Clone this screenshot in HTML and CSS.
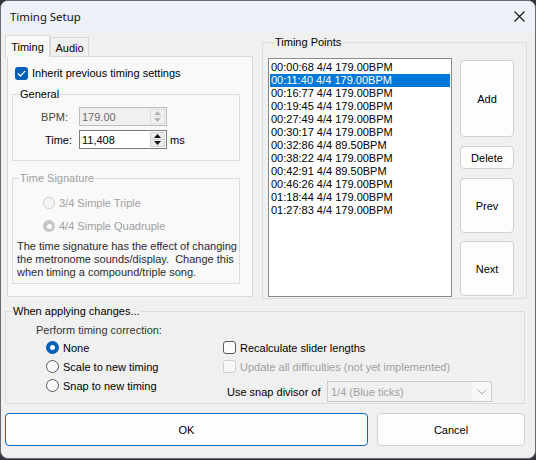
FILE: index.html
```html
<!DOCTYPE html>
<html>
<head>
<meta charset="utf-8">
<title>Timing Setup</title>
<link rel="stylesheet" href="styles.css">
</head>
<body>
<div class="window">
  <div class="titlebar">
    <span class="title">Timing Setup</span>
    <svg class="close" width="11" height="11" viewBox="0 0 11 11"><path d="M0.5 0.5 L10.5 10.5 M10.5 0.5 L0.5 10.5" stroke="#111" stroke-width="1.1" fill="none"/></svg>
  </div>
  <div class="content">
    <div class="top">
      <div class="tabs-col">
        <div class="tabstrip">
          <div class="tab tab-active">Timing</div>
          <div class="tab">Audio</div>
        </div>
        <div class="tabpanel">
          <div class="check-row inherit">
            <span class="checkbox checked"><svg width="13" height="13" viewBox="0 0 13 13"><path d="M3.2 6.8 L5.4 9 L9.8 4.4" stroke="#fff" stroke-width="1.3" fill="none" stroke-linecap="round" stroke-linejoin="round"/></svg></span>
            <span>Inherit previous timing settings</span>
          </div>
          <fieldset class="group general">
            <legend>General</legend>
            <div class="field-row">
              <span class="field-label field-label-bpm">BPM:</span>
              <div class="spinbox spinbox-disabled">
                <span class="spin-value">179.00</span>
                <span class="spin-btns">
                  <span class="spin-half"><svg width="7" height="4" viewBox="0 0 7 4"><polygon points="0,4 3.5,0 7,4" fill="#b4b4b4"/></svg></span>
                  <span class="spin-half"><svg width="7" height="4" viewBox="0 0 7 4"><polygon points="0,0 3.5,4 7,0" fill="#b4b4b4"/></svg></span>
                </span>
              </div>
            </div>
            <div class="field-row field-row-next">
              <span class="field-label">Time:</span>
              <div class="spinbox">
                <span class="spin-value">11,408</span>
                <span class="spin-btns">
                  <span class="spin-half"><svg width="7" height="4" viewBox="0 0 7 4"><polygon points="0,4 3.5,0 7,4" fill="#111"/></svg></span>
                  <span class="spin-half"><svg width="7" height="4" viewBox="0 0 7 4"><polygon points="0,0 3.5,4 7,0" fill="#111"/></svg></span>
                </span>
              </div>
              <span class="unit">ms</span>
            </div>
          </fieldset>
          <fieldset class="group timesig">
            <legend class="legend-disabled">Time Signature</legend>
            <div class="sig-row">
              <span class="radio radio-disabled"></span>
              <span class="text-disabled">3/4 Simple Triple</span>
            </div>
            <div class="sig-row sig-row-next">
              <span class="radio radio-disabled-checked"></span>
              <span class="text-disabled">4/4 Simple Quadruple</span>
            </div>
            <p class="sig-desc">The time signature has the effect of changing<br>the metronome sounds/display.&nbsp; Change this<br>when timing a compound/triple song.</p>
          </fieldset>
        </div>
      </div>
      <fieldset class="group points">
        <legend>Timing Points</legend>
        <div class="points-body">
          <div class="listbox">
            <div class="list-item">00:00:68 4/4 179.00BPM</div>
            <div class="list-item list-item-selected">00:11:40 4/4 179.00BPM</div>
            <div class="list-item">00:16:77 4/4 179.00BPM</div>
            <div class="list-item">00:19:45 4/4 179.00BPM</div>
            <div class="list-item">00:27:49 4/4 179.00BPM</div>
            <div class="list-item">00:30:17 4/4 179.00BPM</div>
            <div class="list-item">00:32:86 4/4 89.50BPM</div>
            <div class="list-item">00:38:22 4/4 179.00BPM</div>
            <div class="list-item">00:42:91 4/4 89.50BPM</div>
            <div class="list-item">00:46:26 4/4 179.00BPM</div>
            <div class="list-item">01:18:44 4/4 179.00BPM</div>
            <div class="list-item">01:27:83 4/4 179.00BPM</div>
          </div>
          <div class="point-buttons">
            <button class="btn btn-add">Add</button>
            <button class="btn btn-delete">Delete</button>
            <button class="btn btn-nav">Prev</button>
            <button class="btn btn-nav btn-next">Next</button>
          </div>
        </div>
      </fieldset>
    </div>
    <fieldset class="group apply">
      <legend>When applying changes...</legend>
      <div class="apply-body">
        <div class="apply-left">
          <div class="apply-label">Perform timing correction:</div>
          <div class="radio-list">
            <div class="opt-row"><span class="radio radio-checked"></span><span>None</span></div>
            <div class="opt-row"><span class="radio"></span><span>Scale to new timing</span></div>
            <div class="opt-row"><span class="radio"></span><span>Snap to new timing</span></div>
          </div>
        </div>
        <div class="apply-right">
          <div class="opt-row opt-row-check"><span class="checkbox"></span><span>Recalculate slider lengths</span></div>
          <div class="opt-row opt-row-check"><span class="checkbox checkbox-disabled"></span><span class="text-disabled">Update all difficulties (not yet implemented)</span></div>
          <div class="snap-row">
            <span class="snap-label">Use snap divisor of</span>
            <div class="combo">
              <span class="combo-value">1/4 (Blue ticks)</span>
              <span class="combo-arrow"><svg width="10" height="6" viewBox="0 0 10 6"><path d="M0.5 0.5 L5 5 L9.5 0.5" stroke="#a8a8a8" stroke-width="1" fill="none"/></svg></span>
            </div>
          </div>
        </div>
      </div>
    </fieldset>
    <div class="actions">
      <button class="btn btn-ok">OK</button>
      <button class="btn btn-cancel">Cancel</button>
    </div>
  </div>
</div>
</body>
</html>
```

FILE: styles.css
```css
* { box-sizing: border-box; }
html, body { margin: 0; padding: 0; }
body {
  width: 536px;
  height: 460px;
  overflow: hidden;
  background: #34343e;
  font-family: "Liberation Sans", Arial, sans-serif;
  font-size: 11px;
  color: #000;
}
.window {
  width: 536px;
  height: 459px;
  background: #f0f0f0;
  border: 1px solid #6a6a72;
  border-radius: 8px;
  overflow: hidden;
  display: flex;
  flex-direction: column;
}
.titlebar {
  height: 31px;
  flex: none;
  background: #eef2f8;
  display: flex;
  align-items: center;
  padding-left: 9px;
}
.title {
  font-family: "Noto Sans", "Open Sans", sans-serif;
  font-size: 11.4px;
  color: #111;
}
.close {
  margin-left: auto;
  margin-right: 10px;
  margin-bottom: 1px;
}
.content {
  flex: 1;
  padding: 3px 10px 0 4px;
  display: flex;
  flex-direction: column;
}
.top {
  display: flex;
  align-items: flex-start;
  gap: 9px;
}
.tabs-col {
  width: 248px;
  flex: none;
}
.tabstrip {
  display: flex;
  align-items: flex-end;
  height: 21px;
}
.tab {
  width: 39px;
  height: 19px;
  border: 1px solid #d9d9d9;
  border-bottom: none;
  background: #f0f0f0;
  display: flex;
  align-items: center;
  justify-content: center;
  padding-top: 1px;
}
.tab-active {
  width: 45px;
  height: 22px;
  margin-bottom: -1px;
  background: #f9f9f9;
  position: relative;
  z-index: 1;
  padding-top: 0;
}
.tabpanel {
  margin-left: 2px;
  width: 246px;
  height: 241px;
  background: #f9f9f9;
  border: 1px solid #d9d9d9;
  padding: 9px 12px 0 4px;
}
.check-row {
  display: flex;
  align-items: center;
  gap: 4px;
}
.inherit {
  height: 14px;
  margin-left: 3px;
}
.checkbox {
  width: 13px;
  height: 13px;
  flex: none;
  border: 1px solid #5a5a5a;
  border-radius: 3px;
  background: #fbfbfb;
  display: flex;
}
.checkbox.checked {
  border: none;
  background: #005fb8;
}
.checkbox-disabled {
  border-color: #cfcfcf;
  background: #f7f7f7;
}
.group {
  margin: 0;
  border: 1px solid #dcdcdc;
  min-width: 0;
  width: 100%;
}
.group legend {
  margin-left: 6px;
  padding: 0 1px;
  line-height: 13px;
  height: 13px;
}
.group .legend-disabled { color: #a0a0a0; }
.general {
  margin-top: 8px;
  padding: 6px 0 11px 0;
}
.field-row {
  display: flex;
  align-items: center;
  height: 19px;
}
.field-row-next { margin-top: 4px; }
.field-label {
  width: 59px;
  margin-right: 7px;
  text-align: right;
}
.field-label-bpm {
  padding-right: 4px;
  color: #444;
}
.spinbox {
  width: 88px;
  height: 19px;
  border: 1px solid #7a7a7a;
  background: #fff;
  display: flex;
  align-items: center;
}
.spinbox-disabled {
  border-color: #bcbcbc;
  background: #f0f0f0;
  color: #6d6d6d;
}
.spin-value {
  flex: 1;
  padding-left: 2px;
}
.spin-btns {
  width: 15px;
  height: 15px;
  margin-right: 1px;
  display: flex;
  flex-direction: column;
}
.spin-half {
  flex: 1;
  display: flex;
  align-items: center;
  justify-content: center;
  background: #ececec;
  border: 1px solid #d4d4d4;
}
.spin-half + .spin-half { border-top: none; }
.spinbox-disabled .spin-half {
  background: #f2f2f2;
  border-color: #e0e0e0;
}
.unit { margin-left: 3px; }
.timesig {
  margin-top: 11px;
  padding: 10px 0 4px 0;
}
.sig-row {
  display: flex;
  align-items: center;
  gap: 4px;
  height: 16px;
  padding-left: 30px;
}
.sig-row-next { margin-top: 7px; }
.text-disabled { color: #a0a0a0; }
.sig-desc {
  margin: 6px 0 0 0;
  padding-left: 4px;
  line-height: 13px;
  color: #2a2a2a;
  white-space: nowrap;
}
.radio {
  width: 13px;
  height: 13px;
  flex: none;
  border-radius: 50%;
  border: 1px solid #5a5a5a;
  background: #f9f9f9;
  display: flex;
  align-items: center;
  justify-content: center;
}
.radio-checked {
  border: none;
  background: #005fb8;
}
.radio-checked::after {
  content: "";
  width: 5px;
  height: 5px;
  border-radius: 50%;
  background: #fff;
}
.radio-disabled {
  width: 12px;
  height: 12px;
  border-color: #cacaca;
  background: #f6f6f6;
}
.radio-disabled-checked {
  width: 12px;
  height: 12px;
  border: none;
  background: #c6c6c6;
}
.radio-disabled-checked::after {
  content: "";
  width: 5px;
  height: 5px;
  border-radius: 50%;
  background: #fff;
}
.points {
  width: 265px;
  flex: none;
  margin-top: 1px;
  margin-right: -2px;
  padding: 9px 12px 1px 5px;
}
.points-body {
  display: flex;
  gap: 8px;
}
.listbox {
  width: 184px;
  height: 239px;
  background: #fff;
  border: 1px solid #8a8a8a;
  padding: 2px 1px;
}
.list-item {
  height: 13px;
  line-height: 13px;
  padding-left: 1px;
  white-space: nowrap;
}
.list-item-selected {
  background: #0078d7;
  color: #fff;
}
.point-buttons {
  display: flex;
  flex-direction: column;
  gap: 9px;
  padding-top: 2px;
}
.btn {
  font-family: "Liberation Sans", Arial, sans-serif;
  font-size: 11px;
  color: #000;
  background: #fdfdfd;
  border: 1px solid #d0d0d0;
  border-radius: 4px;
  padding: 0;
}
.btn-add { width: 54px; height: 77px; }
.btn-delete { width: 54px; height: 23px; }
.btn-nav { width: 54px; height: 55px; }
.btn-next { margin-top: -1px; }
.apply {
  margin-top: 6px;
  padding: 6px 0 1px 0;
}
.apply-body { display: flex; }
.apply-left {
  margin-left: 30px;
  width: 187px;
  flex: none;
}
.apply-label {
  line-height: 13px;
  color: #333;
}
.radio-list { margin-top: 1px; }
.opt-row {
  display: flex;
  align-items: center;
  gap: 4px;
  height: 19px;
}
.radio-list .opt-row { padding-left: 10px; }
.apply-right {
  flex: 1;
  margin-top: 14px;
}
.snap-row {
  display: flex;
  align-items: center;
  margin-top: 5px;
  height: 21px;
  padding-left: 4px;
}
.snap-label { width: 100px; }
.combo {
  width: 165px;
  height: 21px;
  border: 1px solid #cccccc;
  background: #f0f0f0;
  display: flex;
  align-items: center;
}
.combo-value {
  flex: 1;
  padding-left: 3px;
  color: #a0a0a0;
}
.combo-arrow {
  width: 19px;
  height: 19px;
  display: flex;
  align-items: center;
  justify-content: center;
  background: #f7f7f7;
}
.actions {
  display: flex;
  gap: 9px;
  margin-top: 9px;
}
.btn-ok {
  width: 363px;
  height: 33px;
  border-color: #0067c0;
}
.btn-cancel {
  width: 148px;
  height: 33px;
}
```
